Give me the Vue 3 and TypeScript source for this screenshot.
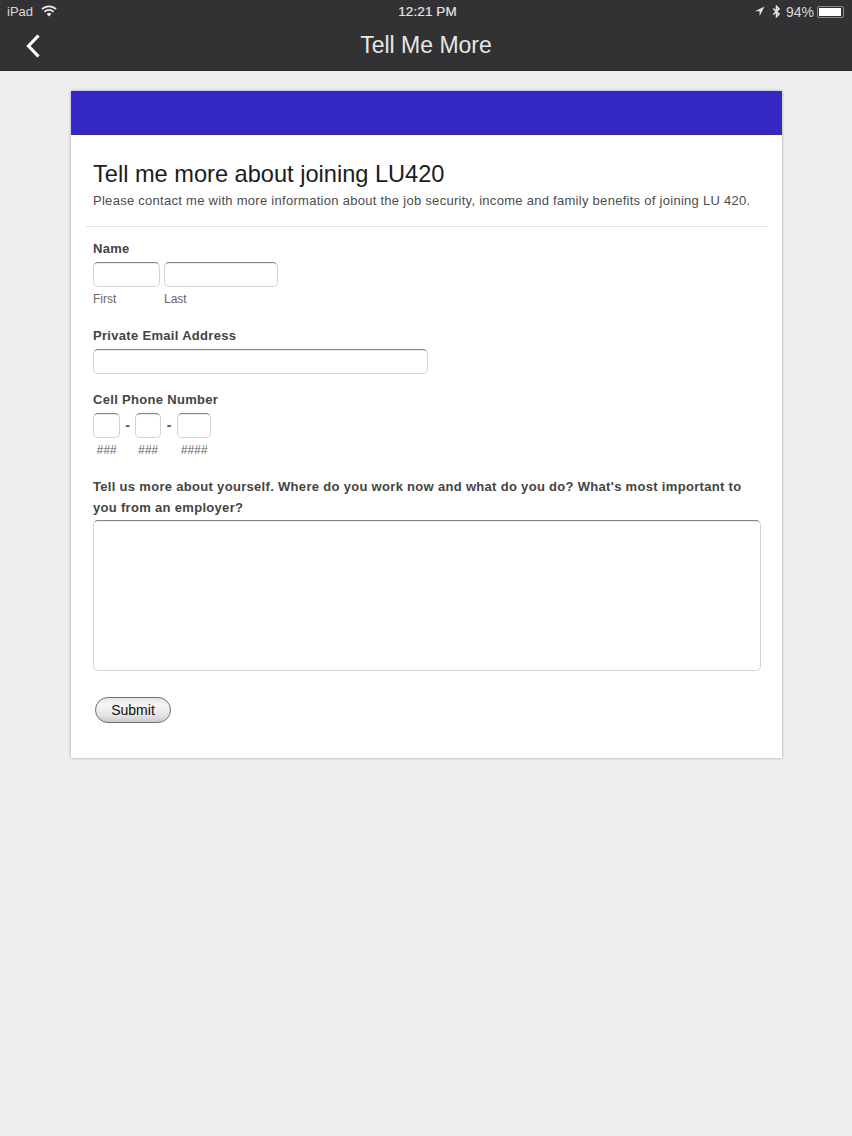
<script setup lang="ts">
</script>

<template>
  <div class="page">
    <header class="top">
      <div class="status">
        <div class="st-left">
          <span>iPad</span>
          <svg class="wifi" width="16" height="12" viewBox="0 0 16 12">
            <path d="M1 4.2A10 10 0 0 1 15 4.2" fill="none" stroke="#e6e6e6" stroke-width="1.8" />
            <path d="M3.4 6.8A6.6 6.6 0 0 1 12.6 6.8" fill="none" stroke="#e6e6e6" stroke-width="1.8" />
            <path d="M8 11.5 5.6 8.9A3.4 3.4 0 0 1 10.4 8.9Z" fill="#e6e6e6" />
          </svg>
        </div>
        <div class="st-time">12:21 PM</div>
        <div class="st-right">
          <svg class="arrow" width="11" height="11" viewBox="0 0 11 11"><path d="M10.5.5 1 5.2h4.6V10Z" fill="#e6e6e6" /></svg>
          <svg class="bt" width="9" height="13" viewBox="0 0 8 12"><path d="M1 3.2 6.4 8.4 4 10.8V1.2L6.4 3.6 1 8.8" fill="none" stroke="#e6e6e6" stroke-width="1.4" /></svg>
          <span class="pct">94%</span>
          <div class="battery"><div class="battery-fill"></div></div>
        </div>
      </div>
      <div class="nav">
        <svg class="back" width="16" height="26" viewBox="0 0 16 26"><path d="M13.5 2.5 3.5 13l10 10.5" fill="none" stroke="#fff" stroke-width="3.2" /></svg>
        <div class="title">Tell Me More</div>
      </div>
    </header>

    <main class="card">
      <div class="banner"></div>
      <div class="intro">
        <h1>Tell me more about joining LU420</h1>
        <p>Please contact me with more information about the job security, income and family benefits of joining LU 420.</p>
      </div>
      <form class="form" @submit.prevent>
        <div class="field name-field">
          <div class="label">Name</div>
          <div class="row name-row">
            <div class="col"><input class="box w-first" type="text" /><span class="sub">First</span></div>
            <div class="col"><input class="box w-last" type="text" /><span class="sub">Last</span></div>
          </div>
        </div>
        <div class="field email-field">
          <div class="label">Private Email Address</div>
          <input class="box w-email" type="text" />
        </div>
        <div class="field phone-field">
          <div class="label">Cell Phone Number</div>
          <div class="row phone-row">
            <div class="col center"><input class="box w-p3" type="text" /><span class="sub hash">###</span></div>
            <span class="dash">-</span>
            <div class="col center"><input class="box w-p3b" type="text" /><span class="sub hash">###</span></div>
            <span class="dash dash-wide">-</span>
            <div class="col center"><input class="box w-p4" type="text" /><span class="sub hash">####</span></div>
          </div>
        </div>
        <div class="field about-field">
          <div class="label about-label">Tell us more about yourself. Where do you work now and what do you do? What's most important to you from an employer?</div>
          <textarea class="box area"></textarea>
        </div>
        <button class="submit" type="submit">Submit</button>
      </form>
    </main>
  </div>
</template>

<style>
html, body { margin: 0; background: #eeeef0; }
</style>

<style scoped>
.page {
  width: 852px;
  height: 1136px;
  background: #eeeef0;
  font-family: "Liberation Sans", Arial, sans-serif;
  overflow: hidden;
}
.top {
  height: 71px;
  box-sizing: border-box;
  background: #323133;
  border-bottom: 1px solid #2a2a2b;
  color: #fff;
}
.status {
  height: 23px;
  display: grid;
  grid-template-columns: 1fr auto 1fr;
  align-items: center;
  padding: 0 8px 0 7px;
  font-size: 13px;
  color: #d8d8d8;
}
.st-left { display: flex; align-items: center; gap: 8px; }
.wifi { margin-top: -2px; }
.st-time { font-size: 13.5px; color: #e4e4e4; letter-spacing: 0.1px; margin-left: 4px; -webkit-text-stroke: 0.2px #e4e4e4; }
.st-right { display: flex; align-items: center; justify-content: flex-end; }
.arrow { margin-right: 7px; }
.bt { margin-right: 5px; }
.pct { font-size: 14px; }
.battery {
  width: 27px;
  height: 12px;
  box-sizing: border-box;
  border: 1px solid #8a8a8a;
  border-radius: 2px;
  padding: 1px;
  margin-left: 3px;
}
.battery-fill { height: 100%; width: 94%; background: #fff; }
.nav {
  height: 47px;
  position: relative;
  display: flex;
  align-items: center;
  justify-content: center;
  margin-top: -1px;
}
.back { position: absolute; left: 25px; top: 11px; }
.title { font-size: 23px; line-height: 44px; margin-top: -1px; color: #e6e6e6; }
.card {
  width: 711px;
  height: 667px;
  box-sizing: border-box;
  margin: 20px 0 0 71px;
  background: #fff;
  box-shadow: 0 0 3px rgba(0, 0, 0, 0.3);
}
.banner { height: 44px; background: #3527c5; }
.intro {
  margin: 0 14px 0 15px;
  padding: 25px 7px 17px;
  border-bottom: 1px solid #e3e3e3;
}
h1 {
  margin: 0;
  font-size: 23.6px;
  line-height: 28px;
  font-weight: 400;
  color: #1c1c1c;
}
p {
  margin: 4px 0 0;
  font-size: 13px;
  line-height: 17px;
  color: #4c4c4c;
  letter-spacing: 0.28px;
  white-space: nowrap;
}
.form { padding: 13px 21px 0 22px; display: flex; flex-direction: column; }
.label {
  font-size: 13px;
  line-height: 18px;
  font-weight: 700;
  color: #444;
  letter-spacing: 0.31px;
}
.row { display: flex; align-items: flex-start; }
.name-row { gap: 4px; margin-top: 4px; }
.col { display: flex; flex-direction: column; }
.center { align-items: center; }
.box {
  display: block;
  box-sizing: border-box;
  height: 25px;
  padding: 0;
  margin: 0;
  background: #fff;
  border: 1px solid #d4d4d8;
  border-top: 1px solid #85828c;
  border-radius: 5px;
  outline: none;
  box-shadow: inset 0 1px 0 #ececee;
}
.w-first { width: 67px; }
.w-last { width: 114px; }
.w-email { width: 335px; margin-top: 4px; }
.sub {
  font-size: 12px;
  line-height: 14px;
  margin-top: 5px;
  color: #666;
}
.email-field { margin-top: 21px; }
.phone-field { margin-top: 17px; }
.phone-row { margin-top: 4px; }
.w-p3 { width: 27px; }
.w-p3b { width: 26px; }
.w-p4 { width: 34px; }
.dash { width: 15px; text-align: center; font-size: 14px; font-weight: 700; line-height: 25px; color: #555; }
.dash-wide { width: 16px; }
.hash { font-size: 12px; font-style: italic; margin-top: 5px; }
.about-field { margin-top: 19px; }
.about-label { line-height: 21px; width: 660px; }
.area {
  width: 668px;
  height: 151px;
  margin-top: 2px;
  resize: none;
}
.submit {
  align-self: flex-start;
  margin: 26px 0 0 2px;
  width: 76px;
  height: 26px;
  padding: 0;
  border: 1px solid #6f6d73;
  border-radius: 13px;
  background: linear-gradient(#e6e6e6, #f6f6f6 30%, #e2e2e2 75%, #c9c9c9);
  font-family: "Liberation Sans", Arial, sans-serif;
  font-size: 14px;
  color: #111;
}
</style>
